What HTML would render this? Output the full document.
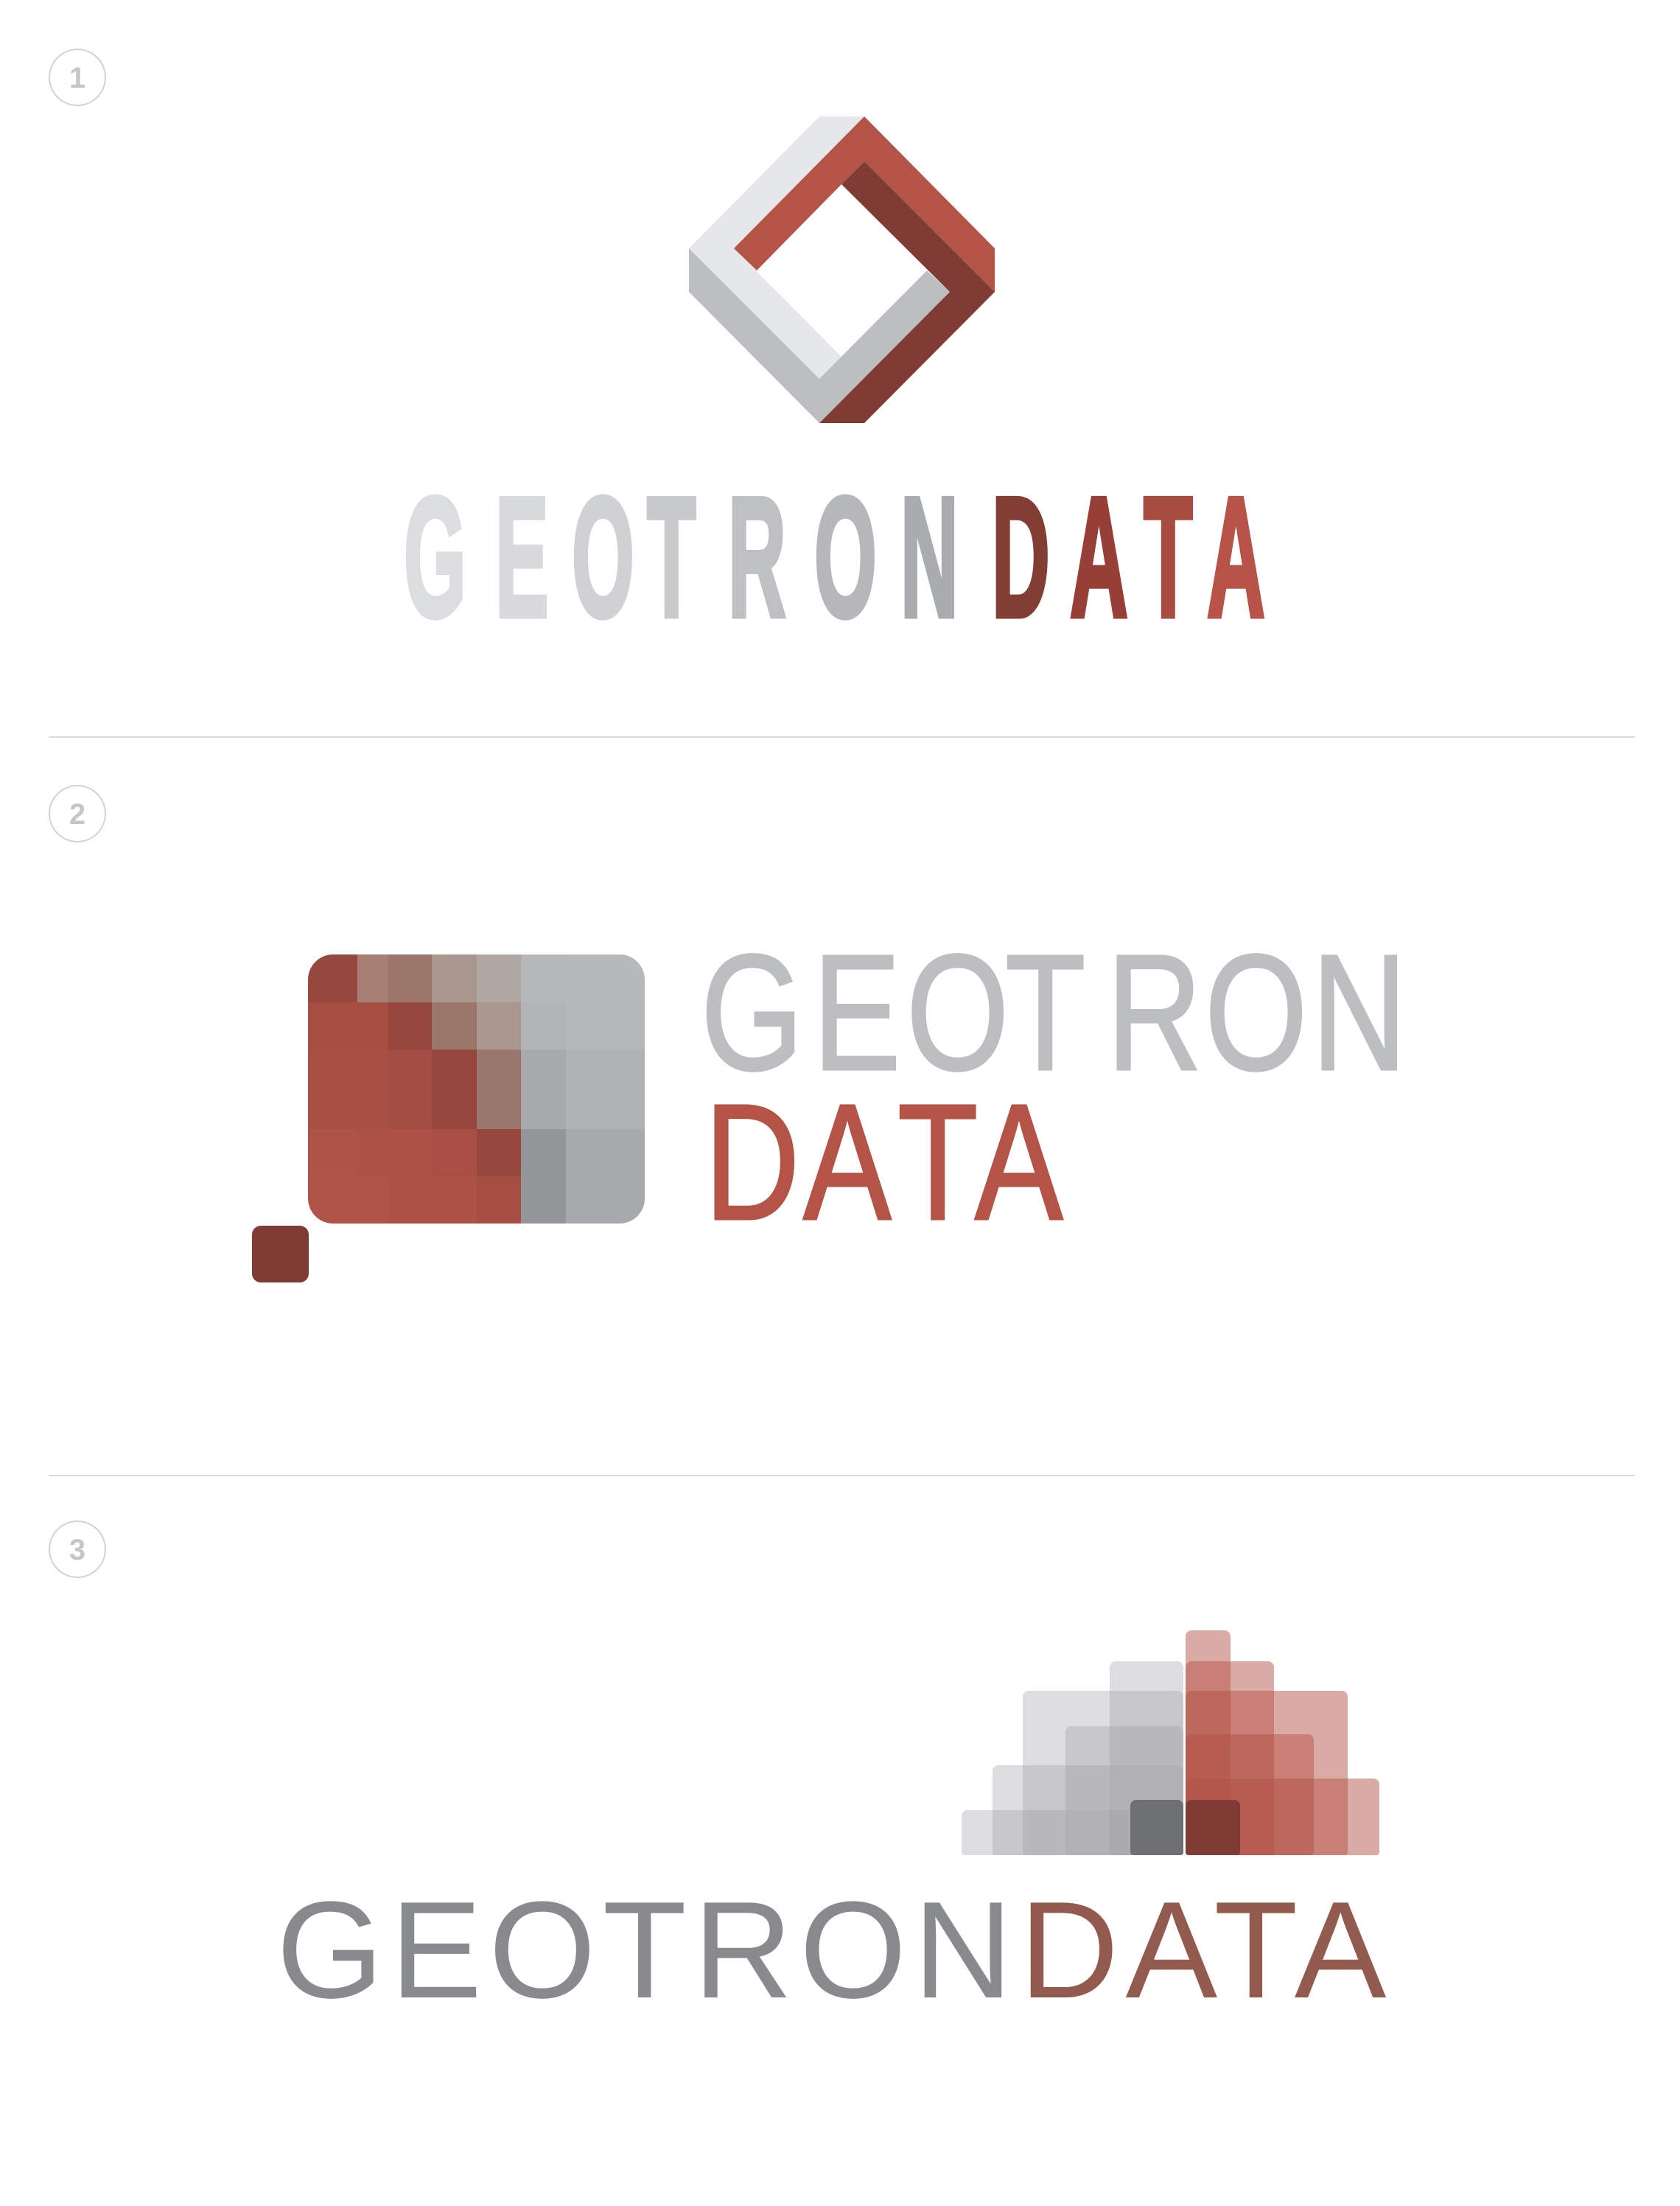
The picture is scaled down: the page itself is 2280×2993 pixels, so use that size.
<!DOCTYPE html>
<html><head><meta charset="utf-8"><style>
html,body{margin:0;padding:0;background:#fff;}
body{width:2280px;height:2993px;position:relative;overflow:hidden;font-family:"Liberation Sans",sans-serif;}
.c{position:absolute;width:78px;height:78px;border:2px solid #d2d2d2;border-radius:50%;box-sizing:border-box;text-align:center;line-height:76px;font-size:40px;font-weight:bold;color:#c6c6c6;}
.hr{position:absolute;left:67px;width:2152px;height:2px;background:#dcdcdc;}
.l{position:absolute;display:block;transform-origin:0 0;white-space:nowrap;line-height:1;}
.w1{font-weight:bold;font-size:232px;transform:scaleX(0.47);-webkit-text-stroke:7px currentColor;}
.w2{font-size:224px;transform:scaleX(0.8);-webkit-text-stroke:3px currentColor;}
.bar{position:absolute;border-radius:8px 8px 4px 4px;}
.r{background:rgba(178,80,66,0.48);}
.g{background:rgba(160,162,166,0.36);}
</style></head><body>
<div class="c" style="left:66px;top:66px">1</div>
<div class="hr" style="top:999px"></div>
<div class="c" style="left:66px;top:1065px">2</div>
<div class="hr" style="top:2001px"></div>
<div class="c" style="left:66px;top:2063px">3</div>

<svg style="position:absolute;left:0;top:0" width="2280" height="700">
<polygon fill="#e6e7e8" points="1112,158 1173,158 996,337 1142,484 1112,514 935,337"/>
<polygon fill="#bcbec0" points="935,337 1112,514 1258,367 1289,396 1112,574 935,396"/>
<polygon fill="#b35446" points="1173,158 1350,337 1350,396 1173,219 1142,250 1027,367 996,337"/>
<polygon fill="#7e3c34" points="1173,219 1350,396 1173,574 1112,574 1289,396 1142,250"/>
</svg>

<div style="position:absolute;left:0;top:0">
<span class="l w1" style="left:548px;top:641px;color:#dcdddf">G</span>
<span class="l w1" style="left:672px;top:641px;color:#d9dadb">E</span>
<span class="l w1" style="left:776px;top:641px;color:#d0d1d2">O</span>
<span class="l w1" style="left:878px;top:641px;color:#c8c9ca">T</span>
<span class="l w1" style="left:988px;top:641px;color:#bfc0c2">R</span>
<span class="l w1" style="left:1105px;top:641px;color:#b5b7b9">O</span>
<span class="l w1" style="left:1222px;top:641px;color:#a9acae">N</span>
<span class="l w1" style="left:1346px;top:641px;color:#823d35">D</span>
<span class="l w1" style="left:1452px;top:641px;color:#973f37">A</span>
<span class="l w1" style="left:1552px;top:641px;color:#a84b40">T</span>
<span class="l w1" style="left:1638px;top:641px;color:#b85347">A</span>
</div>

<!-- logo 2 -->
<div style="position:absolute;left:418px;top:1295px;width:457px;height:365px;border-radius:34px;overflow:hidden">
<svg width="457" height="365" style="display:block">
<g transform="translate(-418,-1295)">
<rect x="418" y="1295" width="67" height="65" fill="#96483e"/><rect x="485" y="1295" width="42" height="65" fill="#a87f75"/><rect x="527" y="1295" width="59" height="65" fill="#9a766b"/><rect x="586" y="1295" width="61" height="65" fill="#a8968f"/><rect x="647" y="1295" width="60" height="65" fill="#b0a7a3"/><rect x="707" y="1295" width="61" height="65" fill="#b6b7ba"/><rect x="768" y="1295" width="107" height="65" fill="#b8b9bc"/>
<rect x="418" y="1360" width="109" height="64" fill="#a74e43"/><rect x="527" y="1360" width="59" height="64" fill="#96473d"/><rect x="586" y="1360" width="61" height="64" fill="#9a766b"/><rect x="647" y="1360" width="60" height="64" fill="#a8968f"/><rect x="707" y="1360" width="61" height="64" fill="#b3b4b7"/><rect x="768" y="1360" width="107" height="64" fill="#b6b7ba"/>
<rect x="418" y="1424" width="109" height="108" fill="#a95045"/><rect x="527" y="1424" width="59" height="108" fill="#a44d43"/><rect x="586" y="1424" width="61" height="108" fill="#96473d"/><rect x="647" y="1424" width="60" height="108" fill="#9a776c"/><rect x="707" y="1424" width="61" height="108" fill="#a8a9ac"/><rect x="768" y="1424" width="107" height="108" fill="#b0b1b4"/>
<rect x="418" y="1532" width="67" height="64" fill="#ad5347"/><rect x="485" y="1532" width="101" height="64" fill="#ab5146"/><rect x="586" y="1532" width="61" height="64" fill="#a94e44"/><rect x="647" y="1532" width="60" height="64" fill="#96473d"/><rect x="707" y="1532" width="61" height="64" fill="#939598"/><rect x="768" y="1532" width="107" height="64" fill="#a8a9ac"/>
<rect x="418" y="1596" width="109" height="64" fill="#b05348"/><rect x="527" y="1596" width="120" height="64" fill="#ae5247"/><rect x="647" y="1596" width="60" height="64" fill="#a74e43"/><rect x="707" y="1596" width="61" height="64" fill="#939598"/><rect x="768" y="1596" width="107" height="64" fill="#a8a9ac"/>
</g></svg></div>
<div style="position:absolute;left:342px;top:1663px;width:77px;height:77px;border-radius:12px;background:#7e3c34"></div>

<span class="l w2" style="left:951px;top:1262px;color:#bcbec0">G</span>
<span class="l w2" style="left:1103px;top:1262px;color:#bcbec0">E</span>
<span class="l w2" style="left:1230px;top:1262px;color:#bcbec0">O</span>
<span class="l w2" style="left:1364px;top:1262px;color:#bcbec0">T</span>
<span class="l w2" style="left:1502px;top:1262px;color:#bcbec0">R</span>
<span class="l w2" style="left:1635px;top:1262px;color:#bcbec0">O</span>
<span class="l w2" style="left:1780px;top:1262px;color:#bcbec0">N</span>
<span class="l w2" style="left:956px;top:1465px;color:#b35446">D</span>
<span class="l w2" style="left:1090px;top:1465px;color:#b35446">A</span>
<span class="l w2" style="left:1218px;top:1465px;color:#b35446">T</span>
<span class="l w2" style="left:1323px;top:1465px;color:#b35446">A</span>

<!-- logo 3 -->
<div style="position:absolute;left:-6px;top:0">
<div class="bar g" style="left:1311px;top:2456px;width:301px;height:61px"></div>
<div class="bar g" style="left:1353px;top:2395px;width:259px;height:122px"></div>
<div class="bar g" style="left:1394px;top:2294px;width:218px;height:223px"></div>
<div class="bar g" style="left:1452px;top:2342px;width:160px;height:175px"></div>
<div class="bar g" style="left:1512px;top:2254px;width:100px;height:263px"></div>
<div class="bar" style="left:1540px;top:2442px;width:72px;height:75px;background:#6f7072"></div>
<div class="bar r" style="left:1615px;top:2212px;width:61px;height:305px"></div>
<div class="bar r" style="left:1615px;top:2254px;width:120px;height:263px"></div>
<div class="bar r" style="left:1615px;top:2294px;width:220px;height:223px"></div>
<div class="bar r" style="left:1615px;top:2353px;width:174px;height:164px"></div>
<div class="bar r" style="left:1615px;top:2413px;width:263px;height:104px"></div>
<div class="bar" style="left:1615px;top:2442px;width:74px;height:75px;background:#7e3c34"></div>
</div>

<div style="position:absolute;left:375px;top:2552px;font-size:187px;line-height:1;letter-spacing:9px;white-space:nowrap;color:#898a8d">GEOTRON<span style="color:#935a4f">DATA</span></div>
</body></html>
